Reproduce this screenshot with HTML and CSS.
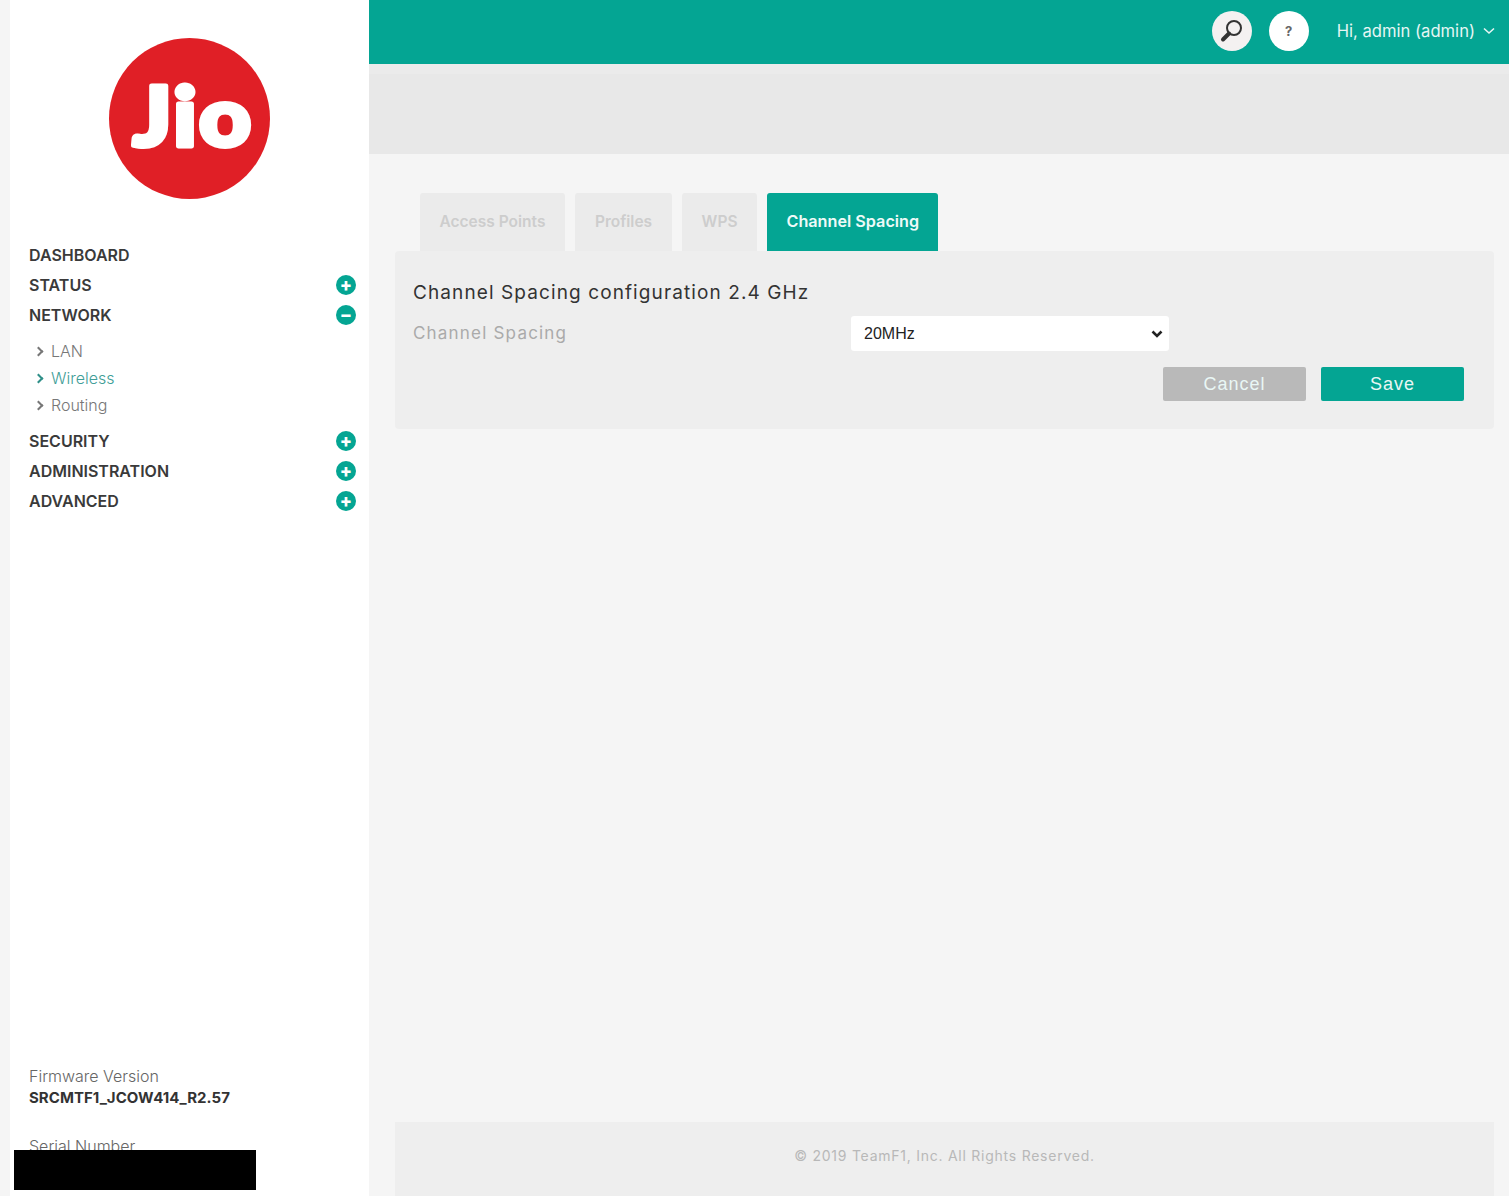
FILE: index.html
```html
<!DOCTYPE html>
<html lang="en">
<head>
    <meta charset="UTF-8">
    <meta name="viewport" content="width=device-width, initial-scale=1.0">
    <title>Jio Router - Channel Spacing</title>
    <link rel="stylesheet" href="styles.css">
</head>
<body>
    <div class="page">
        <aside class="sidebar">
            <div class="logo">
                <svg width="161" height="161" viewBox="0 0 161 161">
                    <circle cx="80.5" cy="80.5" r="80.5" fill="#e01f26"/>
                    <text transform="translate(84 108) scale(1.1 1)" text-anchor="middle" class="logoText">Jio</text>
                </svg>
            </div>
            <nav class="nav">
                <div class="navItem"><span>DASHBOARD</span></div>
                <div class="navItem"><span>STATUS</span><span class="toggle">+</span></div>
                <div class="navItem"><span>NETWORK</span><span class="toggle">&minus;</span></div>
                <ul class="subNav">
                    <li>LAN</li>
                    <li class="current">Wireless</li>
                    <li>Routing</li>
                </ul>
                <div class="navItem"><span>SECURITY</span><span class="toggle">+</span></div>
                <div class="navItem"><span>ADMINISTRATION</span><span class="toggle">+</span></div>
                <div class="navItem"><span>ADVANCED</span><span class="toggle">+</span></div>
            </nav>
            <div class="deviceInfo">
                <p class="infoLabel">Firmware Version</p>
                <p class="infoValue">SRCMTF1_JCOW414_R2.57</p>
                <p class="infoLabel serial">Serial Number</p>
            </div>
            <div class="redacted"></div>
        </aside>
        <main class="main">
            <header class="topbar">
                <span class="roundBtn">
                    <svg width="28" height="28" viewBox="0 0 28 28">
                        <circle cx="16" cy="11" r="7" fill="none" stroke="#333" stroke-width="2"/>
                        <path d="M11 16.5 L5 22.5" stroke="#333" stroke-width="4" stroke-linecap="round"/>
                    </svg>
                </span>
                <span class="roundBtn help">?</span>
                <span class="userName">Hi, admin (admin)</span>
                <svg class="userArrow" width="12" height="8" viewBox="0 0 12 8">
                    <path d="M1 1.5 L6 6 L11 1.5" fill="none" stroke="#e6f6f4" stroke-width="1.6"/>
                </svg>
            </header>
            <div class="band"></div>
            <div class="tabs">
                <a class="tab">Access Points</a>
                <a class="tab">Profiles</a>
                <a class="tab">WPS</a>
                <a class="tab active">Channel Spacing</a>
            </div>
            <section class="panel">
                <h2 class="panelTitle">Channel Spacing configuration 2.4 GHz</h2>
                <div class="formRow">
                    <label class="formLabel" for="spacing">Channel Spacing</label>
                    <select class="formSelect" id="spacing">
                        <option>20MHz</option>
                        <option>20/40MHz</option>
                    </select>
                </div>
                <div class="actions">
                    <button class="btn cancel">Cancel</button>
                    <button class="btn save">Save</button>
                </div>
            </section>
            <footer class="footer">&copy; 2019 TeamF1, Inc. All Rights Reserved.</footer>
        </main>
    </div>
</body>
</html>
```
FILE: styles.css
```css
* {
    box-sizing: border-box;
}
html, body {
    margin: 0;
    height: 100%;
}
body {
    background-color: #f5f5f5;
    font-family: "Inter", "Liberation Sans", sans-serif;
    overflow: hidden;
}
.page {
    display: flex;
    height: 1196px;
    padding-left: 10px;
}
.sidebar {
    position: relative;
    display: flex;
    flex-direction: column;
    flex: none;
    width: 359px;
    background-color: #fff;
    padding: 38px 13px 0 19px;
}
.logo {
    display: flex;
    justify-content: center;
    height: 161px;
    margin: 0 0 41px -7px;
}
.logoText {
    font-family: "Lato", sans-serif;
    font-size: 82px;
    font-weight: 900;
    fill: #fff;
    stroke: #fff;
    stroke-width: 5px;
    stroke-linejoin: round;
    letter-spacing: 2px;
}
.navItem {
    display: flex;
    justify-content: space-between;
    align-items: center;
    height: 30px;
    font-size: 16px;
    font-weight: 600;
    color: #3a3a3a;
}
.toggle {
    display: flex;
    justify-content: center;
    align-items: center;
    width: 20px;
    height: 20px;
    border-radius: 50%;
    background-color: #04a593;
    color: #fff;
    font-size: 18px;
    font-weight: 800;
    line-height: 1;
}
.subNav {
    list-style: none;
    margin: 0;
    padding: 8px 0 7px 22px;
}
.subNav li {
    position: relative;
    height: 27px;
    line-height: 26px;
    font-size: 16px;
    font-weight: 300;
    color: #777;
}
.subNav li::before {
    content: "";
    position: absolute;
    left: -16px;
    top: 10px;
    width: 5px;
    height: 5px;
    border-top: 2px solid #777;
    border-right: 2px solid #777;
    transform: rotate(45deg);
}
.subNav .current {
    color: #3f9e97;
}
.subNav .current::before {
    border-color: #2f8f88;
}
.deviceInfo {
    margin-top: auto;
    height: 131px;
}
.deviceInfo p {
    margin: 0;
}
.infoLabel {
    height: 22px;
    line-height: 22px;
    font-size: 16px;
    font-weight: 300;
    color: #666;
}
.infoValue {
    height: 22px;
    margin-top: 2px;
    line-height: 22px;
    font-size: 15px;
    font-weight: 700;
    letter-spacing: 0.05px;
    color: #333;
}
.deviceInfo .serial {
    margin-top: 26px;
}
.redacted {
    position: absolute;
    left: 4px;
    top: 1150px;
    width: 242px;
    height: 40px;
    background-color: #000;
}
.main {
    display: flex;
    flex-direction: column;
    flex: 1;
    min-width: 0;
}
.topbar {
    display: flex;
    justify-content: flex-end;
    align-items: center;
    gap: 17px;
    height: 64px;
    padding: 0 14px 2px 0;
    background-color: #04a593;
}
.roundBtn {
    display: flex;
    justify-content: center;
    align-items: center;
    width: 40px;
    height: 40px;
    border-radius: 50%;
    background-color: #f4f1f1;
}
.help {
    background-color: #fff;
    color: #666;
    font-size: 13px;
    font-weight: 700;
    margin-right: 11px;
}
.userName {
    color: #e6f6f4;
    font-size: 16.6px;
    margin-right: -9px;
}
.band {
    height: 90px;
    border-top: 10px solid #ebebeb;
    background-color: #e8e8e8;
}
.tabs {
    display: flex;
    gap: 10.5px;
    margin-top: 39px;
    padding-left: 51px;
}
.tab {
    height: 58px;
    padding: 0 19.5px;
    line-height: 57px;
    background-color: #ebebeb;
    border-radius: 3px 3px 0 0;
    color: #cdcdcd;
    font-size: 15.5px;
    font-weight: 600;
}
.tab.active {
    padding: 0 19px;
    background-color: #04a593;
    color: #eefaf8;
    font-size: 16.2px;
}
.panel {
    height: 178px;
    margin: 0 15px 0 26px;
    padding: 29px 30px 0 18px;
    background-color: #eeeeee;
    border-radius: 4px;
}
.panelTitle {
    margin: 0;
    height: 26px;
    line-height: 26px;
    font-size: 19px;
    font-weight: 400;
    letter-spacing: 1.1px;
    color: #333;
}
.formRow {
    display: flex;
    align-items: center;
    margin-top: 10px;
}
.formLabel {
    width: 438px;
    margin-bottom: 2px;
    font-size: 17px;
    letter-spacing: 1.2px;
    color: #aaa;
}
.formSelect {
    appearance: none;
    width: 318px;
    height: 35px;
    padding-left: 13px;
    border: none;
    border-radius: 3px;
    background: #fff url("data:image/svg+xml,%3Csvg xmlns='http://www.w3.org/2000/svg' width='12' height='8' viewBox='0 0 12 8'%3E%3Cpath d='M1.5 1.5 L6 6 L10.5 1.5' fill='none' stroke='%23222' stroke-width='2.6'/%3E%3C/svg%3E") no-repeat right 6px center;
    font-family: "Liberation Sans", sans-serif;
    font-size: 16px;
    color: #222;
}
.actions {
    display: flex;
    justify-content: flex-end;
    gap: 15px;
    margin-top: 16px;
}
.btn {
    width: 143px;
    height: 34px;
    border: none;
    border-radius: 2px;
    font-family: "Liberation Sans", sans-serif;
    font-size: 18px;
    letter-spacing: 1px;
    color: #e9f7f5;
}
.cancel {
    background-color: #b9b9b9;
}
.save {
    background-color: #04a593;
}
.footer {
    margin: auto 15px 0 26px;
    height: 74px;
    line-height: 68px;
    text-align: center;
    background-color: #eeeeee;
    font-size: 14px;
    letter-spacing: 0.75px;
    color: #b8b8b8;
}
```
